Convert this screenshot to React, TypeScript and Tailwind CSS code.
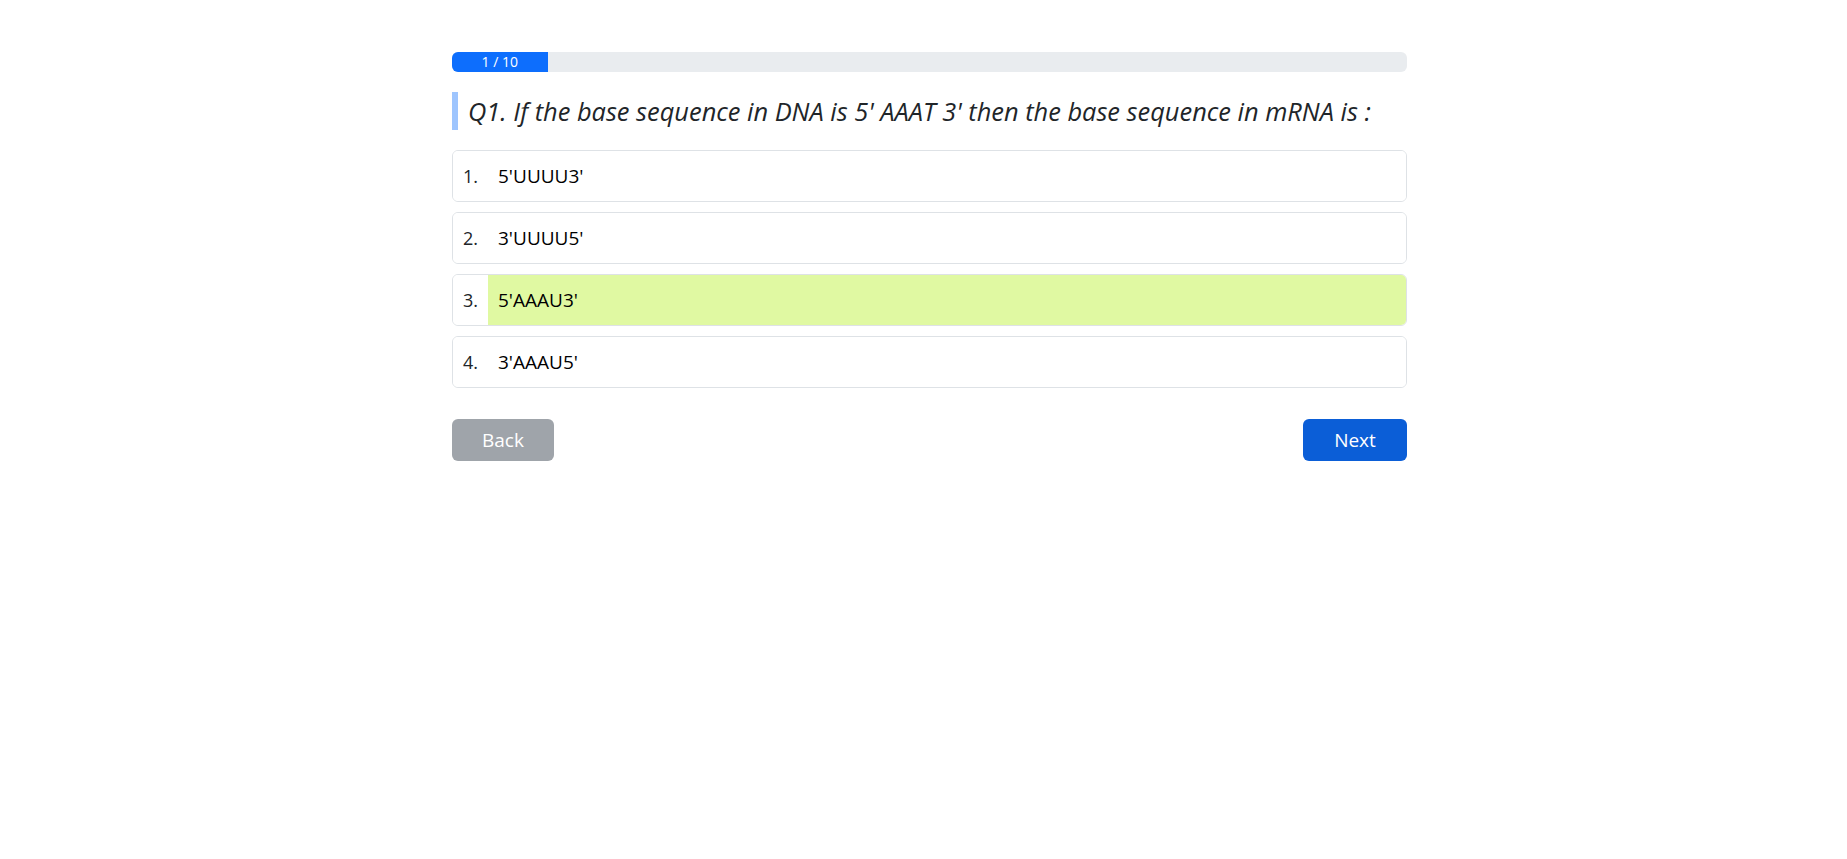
import React from "react";

const options = [
  { n: "1.", t: "5'UUUU3'", sel: false },
  { n: "2.", t: "3'UUUU5'", sel: false },
  { n: "3.", t: "5'AAAU3'", sel: true },
  { n: "4.", t: "3'AAAU5'", sel: false },
];

export default function App() {
  return (
    <div
      className="min-h-screen bg-white pt-[52px] pl-[452px]"
      style={{ fontFamily: '"Open Sans", "Noto Sans", sans-serif' }}
    >
      <div className="w-[955px]">
        <div className="h-[20px] rounded-[6px] bg-[#e9ecef] overflow-hidden flex">
          <div className="w-[10%] bg-[#0d6efd] text-white text-[14px] flex items-center justify-center leading-none">
            1 / 10
          </div>
        </div>
        <div className="mt-[20px] h-[38px] border-l-[6px] border-[#9ec5fe] pl-[10px] flex items-center">
          <p className="italic text-[25.4px] text-[#212529] whitespace-nowrap">
            Q1. If the base sequence in DNA is 5' AAAT 3' then the base sequence in mRNA is :
          </p>
        </div>
        <div className="mt-[20px] flex flex-col gap-[10px]">
          {options.map((o) => (
            <div
              key={o.n}
              className="h-[52px] border border-[#dee2e6] rounded-[6px] flex overflow-hidden"
            >
              <div className="w-[35px] flex items-center pl-[10px] text-[18px] text-[#212529] bg-white">
                {o.n}
              </div>
              <div
                className={
                  "flex-1 flex items-center pl-[10px] text-[19px] text-black " +
                  (o.sel ? "bg-[#e0f9a2]" : "bg-white")
                }
              >
                {o.t}
              </div>
            </div>
          ))}
        </div>
        <div className="mt-[31px] flex justify-between">
          <button className="w-[102px] h-[42px] rounded-[6px] bg-[#9fa4aa] text-white text-[19px]">
            Back
          </button>
          <button className="w-[104px] h-[42px] rounded-[6px] bg-[#0b5ed7] text-white text-[19px]">
            Next
          </button>
        </div>
      </div>
    </div>
  );
}
